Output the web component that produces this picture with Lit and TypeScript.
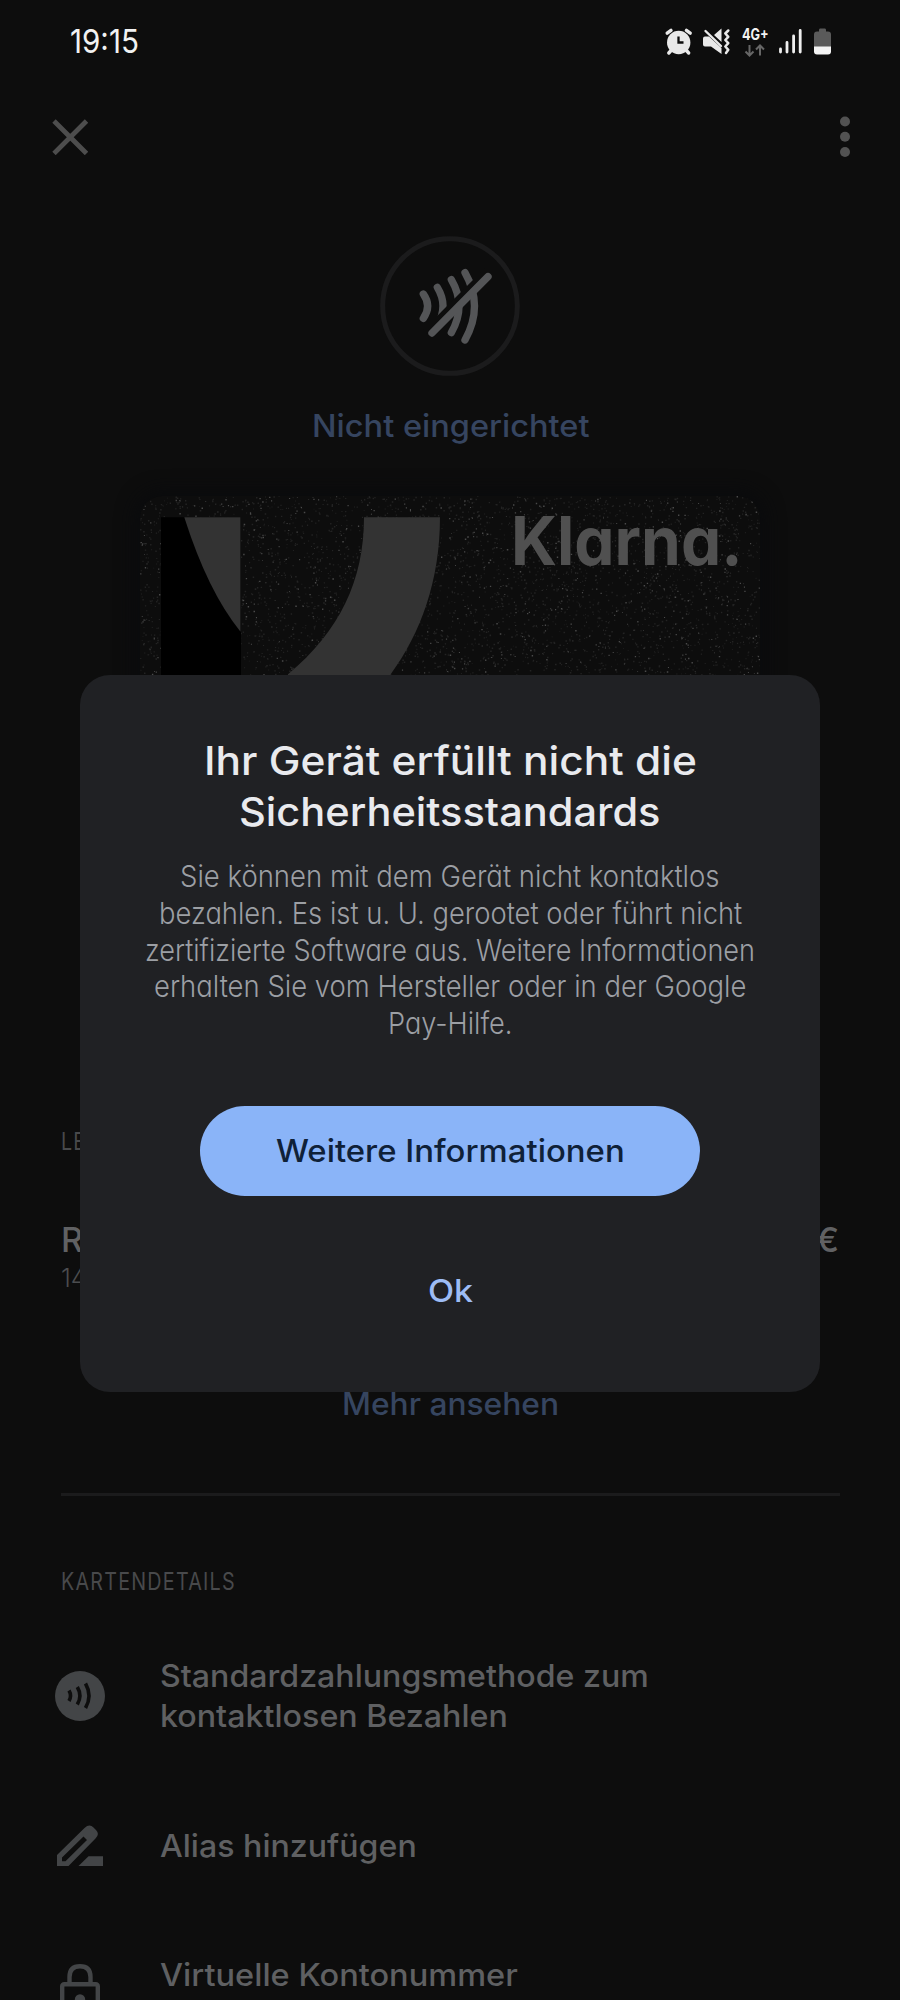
import { LitElement, html, css, svg } from "lit";
import { customElement, property, query, state } from "lit/decorators.js";

/** One line of text condensed or widened to an exact width. */
@customElement("fit-text")
class FitText extends LitElement {
  @property({ type: Number }) width = 0;
  @property() text = "";
  @state() private ratio = 1;
  @query(".run") private run!: HTMLElement;

  static styles = css`
    :host { display: block; flex: none; white-space: nowrap; }
    .box { display: block; }
    .run { display: inline-block; transform-origin: 0 50%; vertical-align: top; }
  `;

  firstUpdated() {
    const natural = this.run.offsetWidth;
    if (natural && this.width) this.ratio = this.width / natural;
  }

  render() {
    return html`<span class="box" style="width:${this.width}px"
      ><span class="run" style="transform:scaleX(${this.ratio})">${this.text}</span></span>`;
  }
}

/** Deterministic grain for the card surface. */
function speckles(width: number, height: number, count: number, seed: number, size: number) {
  let s = seed;
  const next = () => {
    s = (s * 1664525 + 1013904223) % 4294967296;
    return s / 4294967296;
  };
  let d = "";
  for (let i = 0; i < count; i++) {
    const r = (size + next() * 0.8).toFixed(1);
    d += `M${(next() * width).toFixed(1)} ${(next() * height).toFixed(1)}h${r}v${r}h-${r}z`;
  }
  return d;
}

@customElement("status-bar")
class StatusBar extends LitElement {
  static styles = css`
    :host { display: flex; height: 82px; align-items: center; padding: 0 68px 0 70px; justify-content: space-between; color: #f2f2f2; }
    .time { font-size: 33px; line-height: 40px; font-weight: 400; }
    .icons { display: flex; height: 32px; }
    .icons svg { display: block; }
    .net { display: flex; flex-direction: column; width: 28px; margin: 0 9px 0 11px; }
    .gen { font-size: 15.5px; line-height: 19px; font-weight: 700; }
    .g1 { margin-right: 9px; }
    .g2 { margin-right: 11px; }
  `;
  render() {
    return html`
      <fit-text class="time" text="19:15" width="69"></fit-text>
      <div class="icons">
        <svg class="g1" width="29" height="32" viewBox="664 25 29 32">
          <g stroke="#e9e9e9" stroke-linecap="round" fill="none">
            <path stroke-width="3.4" d="M667.2 33.2L671 30.4M690.2 33.2L686.4 30.4M671.5 50L668.8 53M686 50L688.7 53"/>
          </g>
          <circle cx="678.7" cy="42.5" r="11.7" fill="#e9e9e9"/>
          <path d="M678.5 36.5V42.5H683.5" fill="none" stroke="#0d0d0d" stroke-width="2.3"/>
        </svg>
        <svg width="29" height="32" viewBox="702 25 29 32">
          <path fill="#e9e9e9" d="M703 38.5Q703 36.500 705 36.500H709L721.500 48V54L711 46.500H705Q703 46.500 703 44.500ZM714 35L721.500 28.500V42Z"/>
          <path d="M705.5 31L721 46" stroke="#e9e9e9" stroke-width="2.4" stroke-linecap="round"/>
          <path d="M728.3 30.500L725.3 33.500L728.3 36.800L725.3 40L728.3 43.200L725.3 46.500L728.3 49.800L726 53" fill="none" stroke="#e9e9e9" stroke-width="2.5" stroke-linecap="round" stroke-linejoin="round"/>
        </svg>
        <div class="net">
          <fit-text class="gen" text="4G+" width="27"></fit-text>
          <svg width="28" height="13" viewBox="743 44 28 13">
            <path d="M750.5 45V55M746.5 51.500L750.5 55.500L754.5 51.500M761 55.500V46M757 49.500L761 45.500L765 49.500" fill="none" stroke="#666" stroke-width="2"/>
          </svg>
        </div>
        <svg class="g2" width="24" height="32" viewBox="780 25 24 32">
          <path d="M781.5 49V52M788 42.500V52M794.600 36V52M801.200 30.500V52" stroke="#eee" stroke-width="2.8" stroke-linecap="round"/>
        </svg>
        <svg width="18" height="32" viewBox="815 25 18 32">
          <path fill="#5a5a5a" d="M820 30Q820 28.500 821 28.500H826Q827 28.500 827 30V31.500H829Q832 31.500 832 34.500V47H815V34.500Q815 31.500 818 31.500H820Z"/>
          <path fill="#f4f4f4" d="M815 46.500H832V51.500Q832 54.500 829 54.500H818Q815 54.500 815 51.500Z"/>
        </svg>
      </div>`;
  }
}

@customElement("klarna-card")
class KlarnaCard extends LitElement {
  static styles = css`
    :host { display: flex; justify-content: flex-end; position: relative; box-sizing: border-box; width: 620px; height: 391px; padding: 10px 17px 0 0; border-radius: 22px; overflow: hidden; background: #0d0d0d; box-shadow: 0 0 18px 6px #0a0b0d; }
    .art { position: absolute; inset: 0; }
    .mark { position: relative; height: 70px; font-size: 66.7px; line-height: 70px; font-weight: 700; color: #505050; font-feature-settings: "cv11"; }
  `;
  render() {
    return html`
      <svg class="art" width="620" height="391" viewBox="0 0 620 391">
        <path fill="#232323" d=${speckles(620, 391, 8000, 11, 0.8)}></path>
        <path fill="#4a4a4a" d=${speckles(620, 391, 1700, 77, 0.7)}></path>
        <path fill="#000" d="M21 21.3H101V391H21Z"/>
        <path fill="#333" d="M44.3 21.3H100.5V135.7Q67.8 95.5 44.3 21.3Z"/>
        <path fill="#333" d="M224 21.3C224 84 200 135 148 178.3V200H236L250.7 178.3C281 137 300 84 300 21.3Z"/>
      </svg>
      <fit-text class="mark" text="Klarna." width="232"></fit-text>`;
  }
}

const nfcIcon = svg`
  <svg width="50" height="50" viewBox="55 1670 50 50">
    <circle cx="80" cy="1695" r="25" fill="#434547"/>
    <path d="M69 1689.5Q72 1694.7 69 1700M77.3 1686Q82.5 1694.7 77.3 1703.5M85.5 1682.5Q92.5 1694.7 85.5 1707" fill="none" stroke="#0d0d0d" stroke-width="3.6"/>
  </svg>`;
const pencilIcon = svg`
  <svg width="50" height="42" viewBox="55 1823 50 42">
    <path fill="#434547" fill-rule="evenodd" d="M57 1864V1853L84.5 1826Q89.5 1821.500 93.500 1825.500L96 1828Q100 1832 95.500 1836.500L68.500 1864ZM62 1855.500V1859.300H65.500L87 1838L83.500 1834.500Z"/>
    <path fill="#434547" d="M78.5 1864L88.5 1854.2H103V1864Z"/>
  </svg>`;
const lockIcon = svg`
  <svg width="50" height="56" viewBox="55 1960 50 56">
    <path d="M69.5 1981V1975Q69.5 1964.2 80 1964.2Q90.5 1964.2 90.5 1975V1981" fill="none" stroke="#434547" stroke-width="4.4"/>
    <rect x="62.2" y="1982.2" width="35.6" height="31" rx="2" fill="none" stroke="#434547" stroke-width="4.4"/>
    <circle cx="80" cy="1997.5" r="5.2" fill="#434547"/>
  </svg>`;

@customElement("app-root")
class AppRoot extends LitElement {
  static styles = css`
    :host { display: block; position: relative; width: 900px; height: 2000px; overflow: hidden; background: #0d0d0d; font-family: Inter, "Open Sans", sans-serif; color: #5f6062; }
    .bar { display: flex; justify-content: space-between; height: 109px; align-items: center; padding: 0 50px 0 52px; }
    .bar svg { display: block; }
    .page { display: flex; flex-direction: column; }
    .hero { display: flex; flex-direction: column; align-items: center; padding-top: 45px; }
    .med { font-size: 31px; line-height: 40px; font-weight: 500; }
    .blue { color: #364560; }
    .state { margin-top: 30px; }
    klarna-card { margin-top: 50px; }
    .list { display: flex; flex-direction: column; padding: 240px 60px 0 61px; }
    .cap { font-size: 24px; line-height: 30px; font-weight: 400; letter-spacing: 1.5px; color: #48494b; }
    .row { display: flex; justify-content: space-between; margin-top: 63px; margin-right: 1px; font-size: 34px; line-height: 40px; font-weight: 500; color: #606163; }
    .sub { margin-top: 3px; font-size: 25px; line-height: 30px; font-weight: 300; color: #4b4c4e; }
    .more { margin-top: 91px; align-self: center; }
    .rule { height: 3px; margin: 69px 0 71px; background: #1b1b1c; }
    .item { display: grid; grid-template-columns: 50px 1fr; column-gap: 55px; align-items: center; margin-left: -6px; }
    .i1 { margin-top: 59px; }
    .i2 { margin-top: 89px; }
    .i3 { margin-top: 88px; align-items: start; }
    .i3 svg { margin-top: 7px; }
    .dialog { position: absolute; left: 80px; top: 675px; width: 740px; height: 716.5px; box-sizing: border-box; padding-top: 60px; border-radius: 30px; background: #202124; display: flex; flex-direction: column; align-items: center; }
    .title { font-size: 39px; line-height: 51px; font-weight: 500; color: #e9eaee; }
    .body { display: flex; flex-direction: column; align-items: center; margin-top: 21px; font-size: 30px; line-height: 36.7px; font-weight: 350; color: #9c9fa4; font-feature-settings: "cv11"; }
    .body fit-text { height: 36.8px; }
    .primary { margin-top: 64px; width: 500px; height: 90.5px; border-radius: 46px; background: #8ab4f8; color: #0f2138; display: flex; align-items: center; justify-content: center; }
    .ok { margin-top: 74.5px; color: #9dbcf5; }
  `;

  private body: [string, number][] = [
    ["Sie können mit dem Gerät nicht kontaktlos", 540],
    ["bezahlen. Es ist u. U. gerootet oder führt nicht", 583],
    ["zertifizierte Software aus. Weitere Informationen", 610],
    ["erhalten Sie vom Hersteller oder in der Google", 592],
    ["Pay-Hilfe.", 125],
  ];

  render() {
    return html`
      <div class="page">
        <status-bar></status-bar>
        <div class="bar">
          <svg width="36" height="36" viewBox="52 119 36 36"><path d="M54 121L86.5 153.5M86.5 121L54 153.5" stroke="#4d4d4d" stroke-width="4.8"/></svg>
          <svg width="10" height="42" viewBox="840 116 10 42" fill="#525252"><circle cx="845" cy="121.5" r="5"/><circle cx="845" cy="136.8" r="5"/><circle cx="845" cy="152" r="5"/></svg>
        </div>
        <div class="hero">
          <svg width="140" height="140" viewBox="300 50 420 420">
            <circle cx="510" cy="260" r="202" fill="none" stroke="#1b1b1c" stroke-width="15"/>
            <g fill="none" stroke="#545557" stroke-width="22" stroke-linecap="round">
              <path d="M430 224Q456 260 430 297M472 204Q506 260 472 318M514 181Q560 260 514 340M555 160Q612 260 555 362"/>
              <path d="M436 337L618 154" stroke="#0d0d0d" stroke-width="16" stroke-linecap="butt"/>
              <path d="M456 341L624 172"/>
            </g>
          </svg>
          <fit-text class="med blue state" text="Nicht eingerichtet" width="277"></fit-text>
          <klarna-card></klarna-card>
        </div>
        <div class="list">
          <fit-text class="cap" text="LETZTE" width="80"></fit-text>
          <div class="row"><span>R</span><span>€</span></div>
          <div class="sub">14</div>
          <fit-text class="med blue more" text="Mehr ansehen" width="217"></fit-text>
          <div class="rule"></div>
          <fit-text class="cap" text="KARTENDETAILS" width="175"></fit-text>
          <div class="item i1">${nfcIcon}
            <div class="med">
              <fit-text text="Standardzahlungsmethode zum" width="489"></fit-text>
              <fit-text text="kontaktlosen Bezahlen" width="348"></fit-text>
            </div>
          </div>
          <div class="item i2">${pencilIcon}
            <div class="med"><fit-text text="Alias hinzufügen" width="257"></fit-text></div>
          </div>
          <div class="item i3">${lockIcon}
            <div class="med"><fit-text text="Virtuelle Kontonummer" width="358"></fit-text></div>
          </div>
        </div>
      </div>
      <div class="dialog">
        <fit-text class="title" text="Ihr Gerät erfüllt nicht die" width="493"></fit-text>
        <fit-text class="title" text="Sicherheitsstandards" width="422"></fit-text>
        <div class="body">${this.body.map(([t, w]) => html`<fit-text text=${t} width=${w}></fit-text>`)}</div>
        <div class="primary"><fit-text class="med" text="Weitere Informationen" width="349"></fit-text></div>
        <fit-text class="med ok" text="Ok" width="45"></fit-text>
      </div>`;
  }
}
